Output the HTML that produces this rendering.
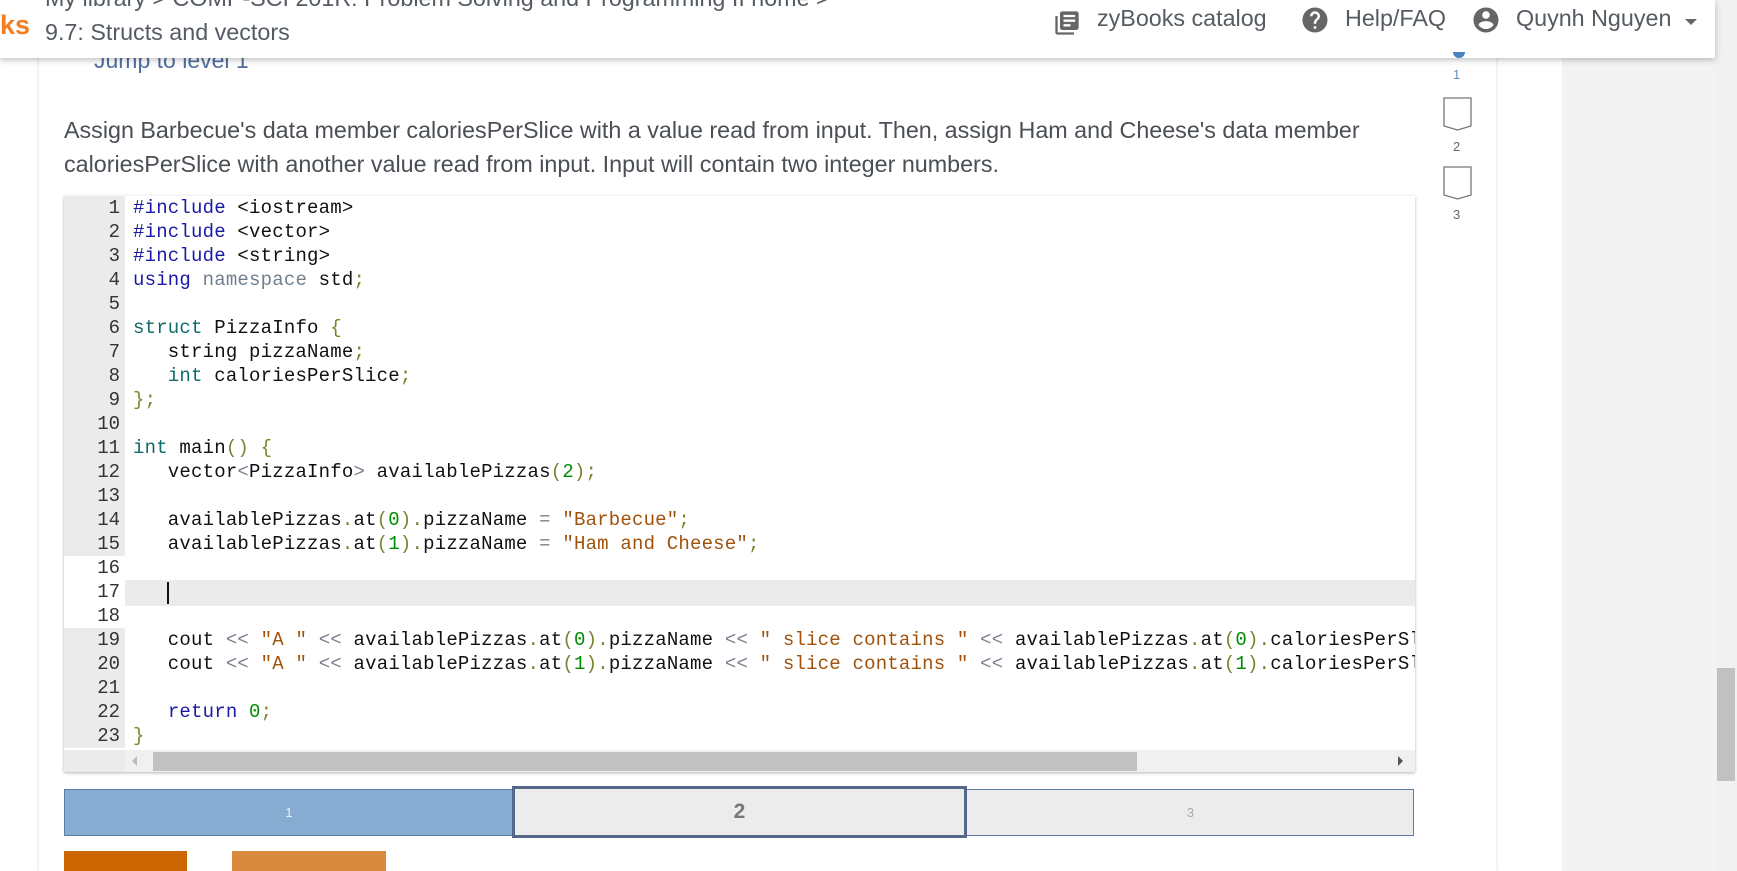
<!DOCTYPE html>
<html><head><meta charset="utf-8"><style>
*{margin:0;padding:0;box-sizing:border-box}
body{width:1737px;height:871px;overflow:hidden;background:#fff;font-family:"Liberation Sans",sans-serif;position:relative}
.abs{position:absolute}
#hdr{left:0;top:0;width:1715px;height:58px;background:#fff;box-shadow:0 2px 6px rgba(0,0,0,.25);z-index:5}
.ht{color:#555b63;font-size:23.3px;white-space:nowrap}
#panel{left:39px;top:0;width:1457px;height:871px;background:#fff;box-shadow:0 0 4px rgba(0,0,0,.15)}
#gray{left:1562px;top:0;width:153px;height:871px;background:#f3f3f3}
#sb{left:1715px;top:0;width:22px;height:871px;background:#f1f1f1}
.p{font-size:23.3px;color:#4a4f55;left:64px;white-space:nowrap}
#ed{left:64px;top:196px;width:1351px;height:576px;background:#fff;box-shadow:0 1px 3px rgba(0,0,0,.3);overflow:hidden}
.ln{position:absolute;left:0;width:1351px;height:24px;font-family:"Liberation Mono",monospace;font-size:19px;line-height:24px;white-space:pre;letter-spacing:0.2px}
.g{position:absolute;left:0;width:61px;height:24px;background:#ebebeb;text-align:right;padding-right:5px;color:#333;letter-spacing:0}
.g.w{background:#fff}
.c{position:absolute;left:69px;color:#111}
.k{color:#1a1aa6}.t{color:#116b6b}.n{color:#708090}.o{color:#808030}.s{color:#a0520a}.d{color:#008c00}.op{color:#7a8090}
</style></head><body>
<div id="panel" class="abs"></div>
<div id="gray" class="abs"></div>
<div id="sb" class="abs"><div class="abs" style="left:2px;top:668px;width:18px;height:113px;background:#c1c1c1"></div></div>

<div id="hdr" class="abs">
 <div class="abs" style="left:0;top:10px;font-size:27px;font-weight:bold;color:#f47d20">ks</div>
 <div class="abs ht" style="left:45px;top:-15px">My library &gt; COMP-SCI 201R: Problem Solving and Programming II home &gt;</div>
 <div class="abs ht" style="left:45px;top:19px">9.7: Structs and vectors</div>
 <svg class="abs" style="left:1053px;top:8px" width="28" height="30" viewBox="0 0 24 24"><path fill="#666" d="M4 6H2v14c0 1.1.9 2 2 2h14v-2H4V6zm16-4H8c-1.1 0-2 .9-2 2v12c0 1.1.9 2 2 2h12c1.1 0 2-.9 2-2V4c0-1.1-.9-2-2-2zm-1 9H9V9h10v2zm-4 4H9v-2h6v2zm4-8H9V5h10v2z"/></svg>
 <div class="abs ht" style="left:1097px;top:5px">zyBooks catalog</div>
 <svg class="abs" style="left:1300px;top:5px" width="30" height="30" viewBox="0 0 24 24"><path fill="#666" d="M12 2C6.48 2 2 6.48 2 12s4.48 10 10 10 10-4.480 10-10S17.52 2 12 2zm1 17h-2v-2h2v2zm2.07-7.75l-.9.92C13.45 12.9 13 13.5 13 15h-2v-.5c0-1.1.45-2.1 1.17-2.83l1.24-1.26c.37-.36.59-.86.59-1.410 0-1.1-.9-2-2-2s-2 .9-2 2H8c0-2.21 1.79-4 4-4s4 1.79 4 4c0 .88-.36 1.68-.93 2.25z"/></svg>
 <div class="abs ht" style="left:1345px;top:5px">Help/FAQ</div>
 <svg class="abs" style="left:1471px;top:5px" width="30" height="30" viewBox="0 0 24 24"><path fill="#666" d="M12 2C6.48 2 2 6.48 2 12s4.48 10 10 10 10-4.48 10-10S17.52 2 12 2zm0 3c1.66 0 3 1.34 3 3s-1.34 3-3 3-3-1.34-3-3 1.34-3 3-3zm0 14.2c-2.5 0-4.71-1.28-6-3.22.03-1.99 4-3.08 6-3.08 1.99 0 5.97 1.09 6 3.080-1.29 1.94-3.5 3.22-6 3.22z"/></svg>
 <div class="abs ht" style="left:1516px;top:5px">Quynh Nguyen</div>
 <div class="abs" style="left:1685px;top:19px;width:0;height:0;border-left:6px solid transparent;border-right:6px solid transparent;border-top:6px solid #666"></div>
</div>

<div class="abs" style="left:94px;top:47px;font-size:23px;color:#4f6f9f">Jump to level 1</div>
<div class="abs" style="left:1453px;top:52px;width:12px;height:6px;background:#4a7fc0;border-radius:0 0 6px 6px;z-index:6"></div>
<div class="abs" style="left:1453px;top:67px;font-size:13px;color:#5e8fc0">1</div>
<svg class="abs" style="left:1443px;top:97px" width="30" height="36"><path d="M1 1H28V29L14.5 33L1 29Z" fill="#fff" stroke="#777" stroke-width="1.3"/></svg>
<div class="abs" style="left:1453px;top:139px;font-size:13px;color:#666">2</div>
<svg class="abs" style="left:1443px;top:166px" width="30" height="36"><path d="M1 1H28V29L14.5 33L1 29Z" fill="#fff" stroke="#777" stroke-width="1.3"/></svg>
<div class="abs" style="left:1453px;top:207px;font-size:13px;color:#666">3</div>

<div class="abs p" style="top:117px">Assign Barbecue's data member caloriesPerSlice with a value read from input. Then, assign Ham and Cheese's data member</div>
<div class="abs p" style="top:151px">caloriesPerSlice with another value read from input. Input will contain two integer numbers.</div>

<div id="ed" class="abs">
<div class="ln" style="top:0"><span class="g">1</span><span class="c"><span class="k">#include</span> &lt;iostream&gt;</span></div>
<div class="ln" style="top:24px"><span class="g">2</span><span class="c"><span class="k">#include</span> &lt;vector&gt;</span></div>
<div class="ln" style="top:48px"><span class="g">3</span><span class="c"><span class="k">#include</span> &lt;string&gt;</span></div>
<div class="ln" style="top:72px"><span class="g">4</span><span class="c"><span class="k">using</span> <span class="n">namespace</span> std<span class="o">;</span></span></div>
<div class="ln" style="top:96px"><span class="g">5</span></div>
<div class="ln" style="top:120px"><span class="g">6</span><span class="c"><span class="t">struct</span> PizzaInfo <span class="o">{</span></span></div>
<div class="ln" style="top:144px"><span class="g">7</span><span class="c">   string pizzaName<span class="o">;</span></span></div>
<div class="ln" style="top:168px"><span class="g">8</span><span class="c">   <span class="t">int</span> caloriesPerSlice<span class="o">;</span></span></div>
<div class="ln" style="top:192px"><span class="g">9</span><span class="c"><span class="o">};</span></span></div>
<div class="ln" style="top:216px"><span class="g">10</span></div>
<div class="ln" style="top:240px"><span class="g">11</span><span class="c"><span class="t">int</span> main<span class="o">()</span> <span class="o">{</span></span></div>
<div class="ln" style="top:264px"><span class="g">12</span><span class="c">   vector<span class="op">&lt;</span>PizzaInfo<span class="op">&gt;</span> availablePizzas<span class="o">(</span><span class="d">2</span><span class="o">);</span></span></div>
<div class="ln" style="top:288px"><span class="g">13</span></div>
<div class="ln" style="top:312px"><span class="g">14</span><span class="c">   availablePizzas<span class="o">.</span>at<span class="o">(</span><span class="d">0</span><span class="o">).</span>pizzaName <span class="op">=</span> <span class="s">"Barbecue"</span><span class="o">;</span></span></div>
<div class="ln" style="top:336px"><span class="g">15</span><span class="c">   availablePizzas<span class="o">.</span>at<span class="o">(</span><span class="d">1</span><span class="o">).</span>pizzaName <span class="op">=</span> <span class="s">"Ham and Cheese"</span><span class="o">;</span></span></div>
<div class="ln" style="top:360px"><span class="g w">16</span></div>
<div class="ln" style="top:384px"><span class="g w">17</span><span style="position:absolute;left:61px;top:0;width:1290px;height:26px;background:#ebebeb"></span><span style="position:absolute;left:103px;top:2px;width:2px;height:22px;background:#111"></span></div>
<div class="ln" style="top:408px"><span class="g w">18</span></div>
<div class="ln" style="top:432px"><span class="g">19</span><span class="c">   cout <span class="op">&lt;&lt;</span> <span class="s">"A "</span> <span class="op">&lt;&lt;</span> availablePizzas<span class="o">.</span>at<span class="o">(</span><span class="d">0</span><span class="o">).</span>pizzaName <span class="op">&lt;&lt;</span> <span class="s">" slice contains "</span> <span class="op">&lt;&lt;</span> availablePizzas<span class="o">.</span>at<span class="o">(</span><span class="d">0</span><span class="o">).</span>caloriesPerSlice</span></div>
<div class="ln" style="top:456px"><span class="g">20</span><span class="c">   cout <span class="op">&lt;&lt;</span> <span class="s">"A "</span> <span class="op">&lt;&lt;</span> availablePizzas<span class="o">.</span>at<span class="o">(</span><span class="d">1</span><span class="o">).</span>pizzaName <span class="op">&lt;&lt;</span> <span class="s">" slice contains "</span> <span class="op">&lt;&lt;</span> availablePizzas<span class="o">.</span>at<span class="o">(</span><span class="d">1</span><span class="o">).</span>caloriesPerSlice</span></div>
<div class="ln" style="top:480px"><span class="g">21</span></div>
<div class="ln" style="top:504px"><span class="g">22</span><span class="c">   <span class="k">return</span> <span class="d">0</span><span class="o">;</span></span></div>
<div class="ln" style="top:528px"><span class="g">23</span><span class="c"><span class="o">}</span></span></div>
<div class="abs" style="left:0;top:554px;width:1351px;height:22px;background:#f0f0f0"></div>
<div class="abs" style="left:0;top:554px;width:61px;height:22px;background:#ebebeb"></div>
<div class="abs" style="left:68px;top:560px;width:0;height:0;border-top:5px solid transparent;border-bottom:5px solid transparent;border-right:5px solid #bbb"></div>
<div class="abs" style="left:89px;top:556px;width:984px;height:19px;background:#c1c1c1"></div>
<div class="abs" style="left:1334px;top:560px;width:0;height:0;border-top:5px solid transparent;border-bottom:5px solid transparent;border-left:5px solid #555"></div>
</div>

<div class="abs" style="left:64px;top:789px;width:1350px;height:47px;background:#ececec;border:1px solid #5a7ea8"></div>
<div class="abs" style="left:64px;top:789px;width:450px;height:47px;background:#87acd1;border:1px solid #5a7ea8;color:#e8f0f8;font-size:13px;text-align:center;line-height:45px">1</div>
<div class="abs" style="left:512px;top:786px;width:455px;height:52px;border:3px solid #56688a;background:#ececec;color:#777;font-size:21px;font-weight:bold;text-align:center;line-height:46px">2</div>
<div class="abs" style="left:967px;top:789px;width:447px;height:47px;color:#aaa;font-size:13px;text-align:center;line-height:47px">3</div>

<div class="abs" style="left:64px;top:851px;width:123px;height:20px;background:#cc6600"></div>
<div class="abs" style="left:232px;top:851px;width:154px;height:20px;background:#d98a3d"></div>
</body></html>
